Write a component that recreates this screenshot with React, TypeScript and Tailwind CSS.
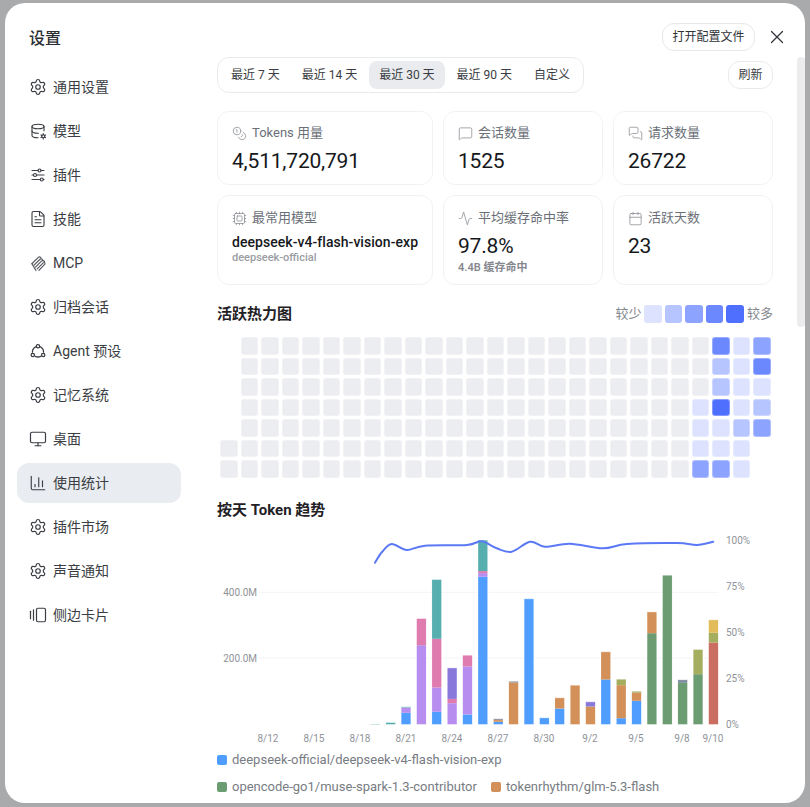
import type { ReactNode } from 'react'
import {
  Activity,
  Calendar,
  ChartColumn,
  Coins,
  Cpu,
  FileText,
  GalleryHorizontalEnd,
  MessageSquare,
  MessagesSquare,
  Monitor,
  Settings,
  X,
} from 'lucide-react'
import { TbAdjustmentsHorizontal, TbDatabaseCog } from 'react-icons/tb'

const font = 'Roboto, "Noto Sans CJK SC", sans-serif'

function McpIcon() {
  return (
    <svg width="17" height="17" viewBox="0 0 16 16" fill="none" stroke="#55585e" strokeWidth="1.1" strokeLinecap="round" strokeLinejoin="round">
      <path d="M1.8 8.2 7.8 2.2C9 1.4 10 2 10.4 3" />
      <path d="M3.6 9.8 9.4 4C10.6 3.2 11.6 3.8 12 4.8" />
      <path d="M5.2 11.4 11 5.6C12.2 4.8 13.2 5.4 13.6 6.4" />
      <path d="M6.8 13 12.4 7.4C13.6 6.6 14.4 7.4 14 8.6L8.4 14.4" />
      <path d="M1.8 8.2 5.6 14.6" />
    </svg>
  )
}

function AgentIcon() {
  return (
    <svg width="16" height="16" viewBox="0 0 16 16" fill="none" stroke="currentColor" strokeWidth="1.25" strokeLinecap="round">
      <circle cx="8" cy="3.2" r="1.7" />
      <circle cx="2.8" cy="12" r="1.7" />
      <circle cx="13.2" cy="12" r="1.7" />
      <path d="M6.2 3.6A6 6 0 0 0 2.4 9.2" />
      <path d="M9.8 3.6A6 6 0 0 1 13.6 9.2" />
      <path d="M5.2 13.4Q8 14.6 10.8 13.4" />
    </svg>
  )
}

const gear = <Settings size={18} strokeWidth={1.6} />

const menu: { label: string; icon: ReactNode }[] = [
  { label: '通用设置', icon: gear },
  { label: '模型', icon: <TbDatabaseCog size={18} strokeWidth={1.5} /> },
  { label: '插件', icon: <TbAdjustmentsHorizontal size={18} strokeWidth={1.5} /> },
  { label: '技能', icon: <FileText size={18} strokeWidth={1.5} /> },
  { label: 'MCP', icon: <McpIcon /> },
  { label: '归档会话', icon: gear },
  { label: 'Agent 预设', icon: <AgentIcon /> },
  { label: '记忆系统', icon: gear },
  { label: '桌面', icon: <Monitor size={18} strokeWidth={1.6} /> },
  { label: '使用统计', icon: <ChartColumn size={18} strokeWidth={1.5} /> },
  { label: '插件市场', icon: gear },
  { label: '声音通知', icon: gear },
  { label: '侧边卡片', icon: <GalleryHorizontalEnd size={18} strokeWidth={1.6} /> },
]

const ranges = ['最近 7 天', '最近 14 天', '最近 30 天', '最近 90 天', '自定义']

const levels = [
  'bg-[#ecedf1]',
  'bg-[#dde3ff]',
  'bg-[#b6c4ff]',
  'bg-[#8ca3ff]',
  'bg-[#6b88ff]',
  'bg-[#4f6fff]',
]

// colored columns of the heatmap, top to bottom; everything left of them is level 0
const hotColumns: Record<number, number[]> = {
  23: [0, 0, 0, 1, 1, 1, 3],
  24: [4, 2, 2, 5, 1, 1, 3],
  25: [1, 1, 1, 1, 2, 1, 1],
  26: [3, 4, 1, 2, 3],
}

function cellLevel(col: number, row: number) {
  if (col === 0 && row < 5) return -1
  if (col === 26 && row > 4) return -1
  const hot = hotColumns[col]
  return hot ? hot[row] : 0
}

const c = {
  blue: '#4f9eff',
  purple: '#b78ef0',
  pink: '#e07bb0',
  teal: '#56aeae',
  indigo: '#8878dc',
  orange: '#d39058',
  green: '#6c9c72',
  olive: '#a4ae5e',
  red: '#c96e60',
  yellow: '#e2bc5a',
  gray: '#8a8f98',
  slate: '#7b8a9c',
}

// [day index from 8/21, stack from the bottom as [colour, px height]]
const bars: [number, [string, number][]][] = [
  [-2, [[c.teal, 0.5]]],
  [-1, [[c.teal, 2]]],
  [0, [[c.blue, 11.7], [c.purple, 5.3], [c.teal, 0.7]]],
  [1, [[c.purple, 79.3], [c.pink, 26.7]]],
  [2, [[c.blue, 12.7], [c.purple, 24.3], [c.pink, 48.7], [c.teal, 59.3]]],
  [3, [[c.purple, 21.3], [c.pink, 4.3], [c.indigo, 31]]],
  [4, [[c.blue, 10], [c.purple, 48], [c.pink, 11.3]]],
  [5, [[c.blue, 147.7], [c.purple, 3.7], [c.pink, 2], [c.teal, 31]]],
  [6, [[c.blue, 2.7], [c.orange, 1.7], [c.gray, 1.3]]],
  [7, [[c.orange, 42], [c.gray, 1.3]]],
  [8, [[c.blue, 125.7]]],
  [9, [[c.blue, 6.7]]],
  [10, [[c.blue, 16], [c.orange, 10.7]]],
  [11, [[c.orange, 39.3]]],
  [12, [[c.orange, 18], [c.indigo, 4.7]]],
  [13, [[c.blue, 45], [c.orange, 27.7]]],
  [14, [[c.blue, 6.3], [c.orange, 33], [c.olive, 6]]],
  [15, [[c.blue, 23.7], [c.orange, 8.3], [c.olive, 1.3]]],
  [16, [[c.green, 91.3], [c.orange, 21.3]]],
  [17, [[c.green, 149.3]]],
  [18, [[c.green, 41.7], [c.slate, 3]]],
  [19, [[c.green, 50.3], [c.olive, 24.7]]],
  [20, [[c.red, 82], [c.olive, 9.7], [c.yellow, 13]]],
]

const linePoints: [number, number][] = [
  [158, 32.7], [165, 22], [174.7, 14], [189.7, 20], [208, 15.7], [250, 15], [264.7, 11.3], [279.7, 18.3],
  [294.7, 21.7], [313, 11.7], [328, 16.7], [353, 13.7], [386, 18.3], [410, 14], [460, 13], [480, 15], [496.3, 11.7],
]

function smoothPath(pts: [number, number][]) {
  let d = `M${pts[0][0]} ${pts[0][1]}`
  for (let i = 0; i < pts.length - 1; i++) {
    const p0 = pts[Math.max(i - 1, 0)]
    const p1 = pts[i]
    const p2 = pts[i + 1]
    const p3 = pts[Math.min(i + 2, pts.length - 1)]
    d += ` C${p1[0] + (p2[0] - p0[0]) / 6} ${p1[1] + (p2[1] - p0[1]) / 6} ${p2[0] - (p3[0] - p1[0]) / 6} ${p2[1] - (p3[1] - p1[1]) / 6} ${p2[0]} ${p2[1]}`
  }
  return d
}

function TokenChart() {
  const baseY = 194.5
  const toX = (i: number) => 189 + 15.37 * i
  const axisText = { fontSize: 10, fill: '#8f9399', fontFamily: font }
  return (
    <svg width="556" height="220" viewBox="0 0 556 220" className="block">
      <line x1="41" x2="501" y1="62.3" y2="62.3" stroke="#f3f4f6" />
      <line x1="41" x2="501" y1="128" y2="128" stroke="#f3f4f6" />
      <text x="40" y="66" textAnchor="end" {...axisText}>400.0M</text>
      <text x="40" y="132" textAnchor="end" {...axisText}>200.0M</text>
      {[['100%', 14], ['75%', 60], ['50%', 106], ['25%', 152], ['0%', 198]].map(([t, y]) => (
        <text key={t} x="509" y={y} {...axisText}>{t}</text>
      ))}
      {[['8/12', 51], ['8/15', 97], ['8/18', 143], ['8/21', 189], ['8/24', 235], ['8/27', 281], ['8/30', 327], ['9/2', 373], ['9/5', 419], ['9/8', 465], ['9/10', 496]].map(([t, x]) => (
        <text key={t} x={x} y="212" textAnchor="middle" {...axisText}>{t}</text>
      ))}
      {bars.map(([i, stack]) => {
        let y = baseY
        return (
          <g key={i}>
            {stack.map(([color, h], k) => {
              y -= h
              return <rect key={k} x={toX(i) - 4.8} y={y} width="9.6" height={h} fill={color} />
            })}
            <rect x={toX(i) - 5} y={y} width="10" height={baseY - y} fill="none" stroke="#ffffff" strokeOpacity="0.5" strokeWidth="0.8" />
          </g>
        )
      })}
      <path d={smoothPath(linePoints)} fill="none" stroke="#5b79f5" strokeWidth="2" strokeLinecap="round" />
    </svg>
  )
}

function StatCard({ icon, label, children, className }: { icon: ReactNode; label: string; children: ReactNode; className: string }) {
  return (
    <div className={`rounded-xl border border-[#f1f2f4] px-[14px] ${className}`}>
      <div className="flex items-center gap-[5px] text-[13px] leading-[18px] text-[#6b7078]">
        <span className="text-[#8a8e95]">{icon}</span>
        {label}
      </div>
      {children}
    </div>
  )
}

function LegendItem({ color, label }: { color: string; label: string }) {
  return (
    <div className="flex items-center gap-[5px]">
      <span className={`h-[10px] w-[10px] rounded-[2px] ${color}`} />
      <span className="text-[13px] leading-[18px] text-[#787c83]">{label}</span>
    </div>
  )
}

export default function App() {
  const value = 'text-[21px] leading-[30px] font-normal tracking-[-0.2px] text-[#16181c]'
  return (
    <div className="h-[807px] w-[810px] overflow-hidden bg-[#a9aaac] pl-[5px] pt-[3px]" style={{ fontFamily: font }}>
      <div className="relative flex h-[800px] w-[800px] overflow-hidden rounded-[20px] bg-white">
        {/* sidebar */}
        <aside className="w-[212px] shrink-0 pl-[12px]">
          <h1 className="pl-[12px] pt-[25px] text-[16px] leading-[22px] font-medium text-[#2b2e33]">设置</h1>
          <nav className="mt-[17px] flex w-[164px] flex-col gap-[4px]">
            {menu.map((item) => (
              <div
                key={item.label}
                className={`flex h-[40px] items-center gap-[6px] rounded-xl pl-[12px] text-[14px] text-[#3a3d43] ${item.label === '使用统计' ? 'bg-[#e9ecf1]' : ''}`}
              >
                <span className="flex w-[18px] justify-center">{item.icon}</span>
                {item.label}
              </div>
            ))}
          </nav>
        </aside>

        {/* main */}
        <main className="w-[556px] shrink-0">
          <div className="flex h-[54px] items-end justify-end">
            <button className="mb-[6px] mr-[-1px] h-[28px] w-[93px] rounded-xl border border-[#e7e8ea] text-[12px] text-[#2f3237]">打开配置文件</button>
            <span className="mb-[6px] ml-[12px] mr-[-15px] flex h-[28px] w-[22px] items-center justify-center text-[#33363b]">
              <X size={22} strokeWidth={1.3} />
            </span>
          </div>

          <div className="flex items-center justify-between">
            <div className="flex h-[36px] items-center gap-[2px] rounded-xl border border-[#e9eaec] px-[3px] text-[12px] text-[#3a3d43]">
              {ranges.map((r) => (
                <span key={r} className={`flex h-[28px] items-center rounded-lg px-[10px] ${r === '最近 30 天' ? 'bg-[#e9ebee]' : ''}`}>{r}</span>
              ))}
            </div>
            <button className="h-[28px] w-[45px] rounded-xl border border-[#e9eaec] text-[12px] text-[#3a3d43]">刷新</button>
          </div>

          <div className="mt-[18px] grid grid-cols-[216px_160px_160px] gap-[10px]">
            <StatCard className="h-[74px] pt-[12px]" icon={<Coins size={15} strokeWidth={1.25} />} label="Tokens 用量">
              <div className={`mt-[4px] ${value}`}>4,511,720,791</div>
            </StatCard>
            <StatCard className="h-[74px] pt-[12px]" icon={<MessageSquare size={15} strokeWidth={1.25} />} label="会话数量">
              <div className={`mt-[4px] ${value}`}>1525</div>
            </StatCard>
            <StatCard className="h-[74px] pt-[12px]" icon={<MessagesSquare size={15} strokeWidth={1.25} />} label="请求数量">
              <div className={`mt-[4px] ${value}`}>26722</div>
            </StatCard>
            <StatCard className="h-[90px] pt-[13px]" icon={<Cpu size={15} strokeWidth={1.25} />} label="最常用模型">
              <div className="mt-[6px] text-[14px] leading-[18px] font-medium tracking-[0.05px] whitespace-nowrap text-[#16181c]">deepseek-v4-flash-vision-exp</div>
              <div className="text-[11px] leading-[13px] font-medium text-[#9a9da3]">deepseek-official</div>
            </StatCard>
            <StatCard className="h-[90px] pt-[13px]" icon={<Activity size={15} strokeWidth={1.25} />} label="平均缓存命中率">
              <div className={`mt-[4px] ${value}`}>97.8%</div>
              <div className="text-[11px] leading-[14px] font-semibold text-[#85888e]">4.4B 缓存命中</div>
            </StatCard>
            <StatCard className="h-[90px] pt-[13px]" icon={<Calendar size={15} strokeWidth={1.25} />} label="活跃天数">
              <div className={`mt-[4px] ${value}`}>23</div>
            </StatCard>
          </div>

          <div className="mt-[18px] flex h-[22px] items-center justify-between">
            <h2 className="text-[15px] font-bold text-[#1f2125]">活跃热力图</h2>
            <div className="flex items-center gap-[3px] text-[13px] text-[#85888e]">
              较少
              {levels.slice(1).map((l) => (
                <span key={l} className={`h-[18px] w-[17.5px] rounded-[3px] ${l}`} />
              ))}
              较多
            </div>
          </div>

          <div className="mt-[12px] ml-[3px] grid grid-flow-col grid-cols-[repeat(27,17.5px)] grid-rows-[repeat(7,17.5px)] gap-[3px]">
            {Array.from({ length: 27 * 7 }, (_, n) => {
              const col = Math.floor(n / 7)
              const row = n % 7
              const level = cellLevel(col, row)
              return <span key={n} className={`rounded-[3px] border border-white/30 ${level < 0 ? 'invisible' : levels[level]}`} />
            })}
          </div>

          <h2 className="mt-[21px] text-[15px] leading-[22px] font-bold text-[#1f2125]">按天 Token 趋势</h2>

          <div className="mt-[9px]">
            <TokenChart />
          </div>

          <div className="mt-[1px] flex flex-col gap-[9px]">
            <LegendItem color="bg-[#4f9eff]" label="deepseek-official/deepseek-v4-flash-vision-exp" />
            <div className="flex gap-[14px]">
              <LegendItem color="bg-[#6c9c72]" label="opencode-go1/muse-spark-1.3-contributor" />
              <LegendItem color="bg-[#d39058]" label="tokenrhythm/glm-5.3-flash" />
            </div>
          </div>
        </main>

        {/* scrollbar thumb */}
        <div className="absolute right-0 top-[54px] h-[270px] w-[8px] rounded-full bg-[#ececee]" />
      </div>
    </div>
  )
}
